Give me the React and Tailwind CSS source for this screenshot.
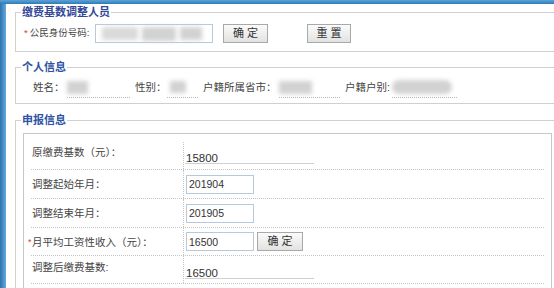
const font = "font-['Liberation_Sans','Noto_Sans_CJK_SC',sans-serif]";

function Btn({ children, className = '' }) {
  return (
    <button
      className={`h-[19px] border border-[#a9a9a9] bg-linear-to-b from-[#fbfbfb] to-[#e2e2e2] text-[11px] leading-[17px] text-[#333] ${className}`}
    >
      {children}
    </button>
  );
}

function Blob({ className = '' }) {
  return <div className={`bg-[#d2d2d2] blur-[2px] ${className}`} />;
}

function InfoItem({ label, labelW, valueW, ml, blob }) {
  return (
    <>
      <span className={`${ml} ${labelW} whitespace-nowrap leading-[20px]`}>{label}</span>
      <span className={`${valueW} h-[21px] border-b border-dotted border-[#b8b8b8] flex items-center`}>
        {blob}
      </span>
    </>
  );
}

function Row({ h, label, star, labelClass = 'items-center', children, cellClass = 'items-center' }) {
  return (
    <div className={`flex ${h} border-b border-dotted border-[#c4c4c4]`}>
      <div className={`w-[152px] pl-[1px] flex ${labelClass} text-[10.5px] leading-[16px]`}>
        <div className="flex">
          {star && <span className="ml-[-4px] w-[4px] text-[9px] text-[#e0382c]">*</span>}
          <span className="whitespace-nowrap">{label}</span>
        </div>
      </div>
      <div className={`flex-1 flex ${cellClass} border-l border-dotted border-[#c4c4c4] pl-[1px]`}>{children}</div>
    </div>
  );
}

function TextInput({ value }) {
  return (
    <input
      defaultValue={value}
      className="ml-[1px] w-[68px] h-[19px] border border-[#b7c9dc] bg-white px-[2px] text-[10.5px] text-[#333] outline-none"
    />
  );
}

function Static({ value }) {
  return (
    <div className="w-[129px] h-[12px] border-b border-[#d0d0d0] pl-[1px] text-[11.5px] leading-[12px] text-[#333]">
      {value}
    </div>
  );
}

export default function App() {
  return (
    <div className={`w-[554px] h-[288px] overflow-hidden bg-white text-[#444] ${font}`}>
      <div className="h-[4px] bg-linear-to-b from-[#5aa3d8] to-[#2f79b5]" />
      <div className="flex">
        <div className="w-[6px] h-[284px] shrink-0 bg-linear-to-r from-[#2b72ad] to-[#66abdc]" />
        <div className="pl-[9px]">
          {/* 缴费基数调整人员 */}
          <fieldset className="w-[545px] border border-[#d0d0d0] px-[5px] pb-[8px]">
            <legend className="px-[1px] text-[11px] font-bold leading-[16px] text-[#34489a]">缴费基数调整人员</legend>
            <div className="flex items-center pt-[4px] h-[23px]">
              <div className="w-[74px] pl-[3px] flex items-center text-[9.5px] whitespace-nowrap">
                <span className="text-[#e0382c] mr-[2px]">*</span>
                <span>公民身份号码:</span>
              </div>
              <div className="w-[118px] h-[19px] border border-[#b7c9dc] flex items-center gap-[4px] px-[6px]">
                <Blob className="w-[36px] h-[13px] bg-[#dadada]" />
                <Blob className="w-[34px] h-[14px] bg-[#c2c2c2]" />
                <Blob className="w-[22px] h-[13px] bg-[#c9c9c9]" />
              </div>
              <Btn className="ml-[10px] w-[45px]">确 定</Btn>
              <Btn className="ml-[39px] w-[44px]">重 置</Btn>
            </div>
          </fieldset>

          {/* 个人信息 */}
          <fieldset className="mt-[7px] w-[545px] border border-[#d0d0d0] px-[5px] pb-[5px]">
            <legend className="px-[1px] text-[11px] font-bold leading-[16px] text-[#2f53a3]">个人信息</legend>
            <div className="flex items-start pt-[2px] text-[10.5px]">
              <InfoItem label="姓名：" ml="ml-[12px]" labelW="w-[34px]" valueW="w-[63px]" blob={<Blob className="w-[21px] h-[13px]" />} />
              <InfoItem label="性别：" ml="ml-[5px]" labelW="w-[32px]" valueW="w-[31px]" blob={<Blob className="ml-[3px] w-[16px] h-[12px]" />} />
              <InfoItem label="户籍所属省市：" ml="ml-[5px]" labelW="w-[76px]" valueW="w-[61px]" blob={<Blob className="w-[33px] h-[13px]" />} />
              <InfoItem label="户籍户别:" ml="ml-[5px]" labelW="w-[47px]" valueW="w-[65px]" blob={<Blob className="w-[60px] h-[14px] rounded-full" />} />
            </div>
          </fieldset>

          {/* 申报信息 */}
          <fieldset className="mt-[8px] w-[545px] border border-[#d0d0d0] px-[5px] pt-[5px]">
            <legend className="px-[1px] text-[11px] font-bold leading-[16px] text-[#2f53a3]">申报信息</legend>
            <div className="ml-[2px] w-[529px] h-[200px] border border-[#c8c8c8] px-[7px] pt-[8px]">
              <Row h="h-[28px]" label="原缴费基数（元）：" labelClass="items-start pt-[2px]" cellClass="items-start pt-[10px]">
                <Static value="15800" />
              </Row>
              <Row h="h-[29px]" label="调整起始年月：">
                <TextInput value="201904" />
              </Row>
              <Row h="h-[29px]" label="调整结束年月：">
                <TextInput value="201905" />
              </Row>
              <Row h="h-[28px]" label="月平均工资性收入（元）：" star>
                <TextInput value="16500" />
                <Btn className="ml-[3px] w-[46px]">确 定</Btn>
              </Row>
              <Row h="h-[28px]" label="调整后缴费基数:" labelClass="items-start pt-[3px]" cellClass="items-start pt-[11px]">
                <Static value="16500" />
              </Row>
            </div>
          </fieldset>
        </div>
      </div>
    </div>
  );
}
